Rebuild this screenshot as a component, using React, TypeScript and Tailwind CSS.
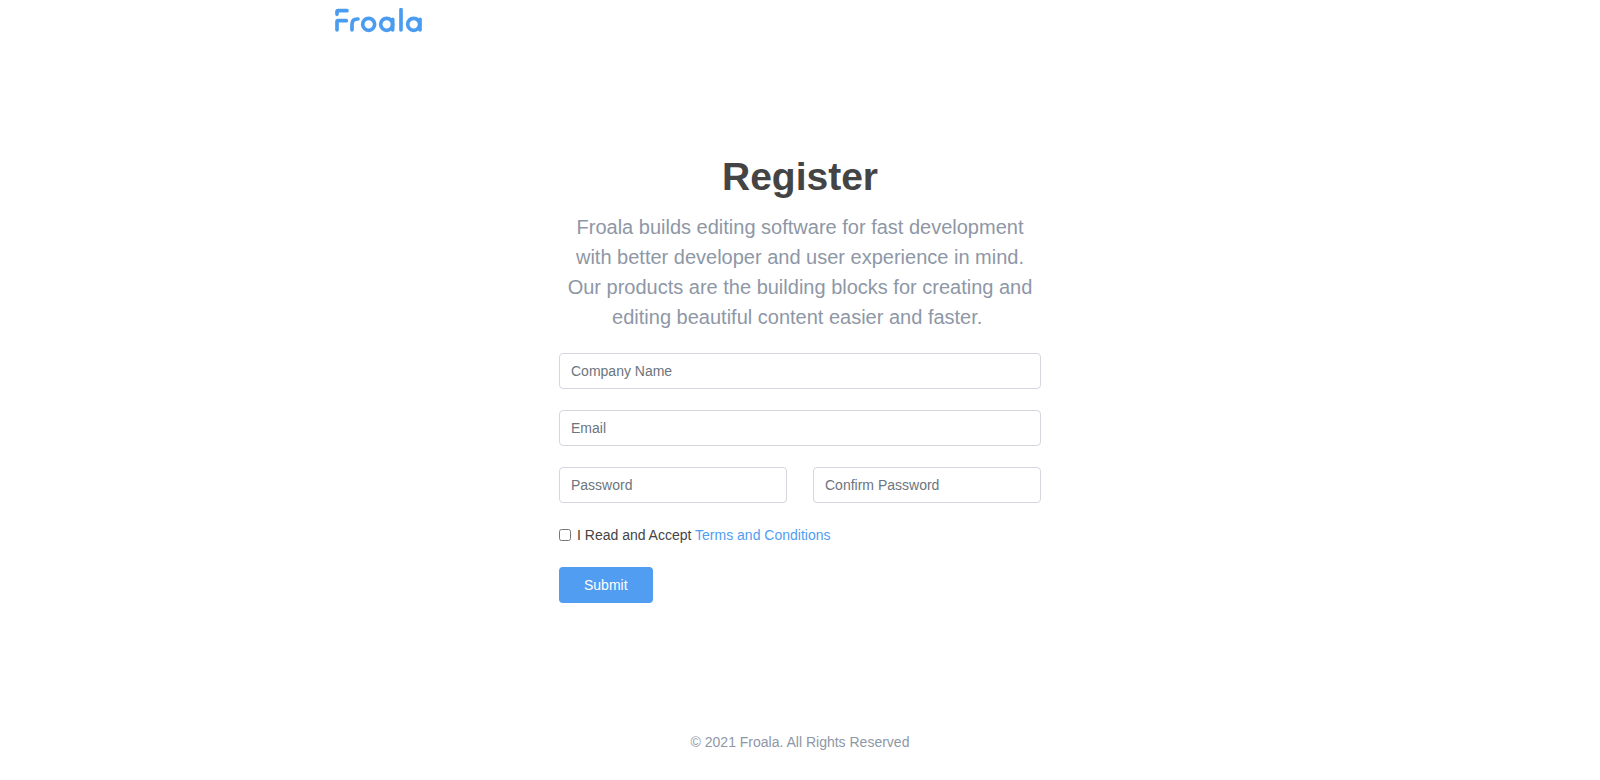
import type { InputHTMLAttributes } from 'react'

function Logo() {
    return (
        <svg
            viewBox="0 0 264 78"
            className="w-[88px] h-[26px]"
            fill="none"
            stroke="#4a9cf0"
            strokeWidth="11"
            strokeLinecap="round"
            strokeLinejoin="round"
            role="img"
            aria-label="Froala"
        >
            <path d="M6 19V12Q6 8 10 8H36" />
            <path d="M6 66V42Q6 38 10 38H34" />
            <path d="M51 66V49Q51 33 67 33H69" />
            <circle cx="101" cy="49" r="18" />
            <circle cx="155" cy="49" r="18" />
            <path d="M173 34V66" />
            <path d="M198 5V66" />
            <circle cx="236" cy="49" r="18" />
            <path d="M255 34V66" />
        </svg>
    )
}

function Field({ label, ...props }: InputHTMLAttributes<HTMLInputElement> & { label: string }) {
    return (
        <input
            aria-label={label}
            placeholder={label}
            className="w-full h-9 px-[11px] rounded-[4px] border border-[#d5d7de] bg-white text-[#444444] placeholder:text-[#6c757d] focus:outline-none focus:border-[#509df2]"
            {...props}
        />
    )
}

export default function App() {
    return (
        <div className="min-h-screen flex flex-col bg-white text-sm text-[#444444] font-['Liberation_Sans',Arial,sans-serif]">
            <header className="w-full max-w-[930px] mx-auto pt-2">
                <a href="#" className="inline-block align-top">
                    <Logo />
                </a>
            </header>

            <main className="w-full max-w-[482px] mx-auto pt-[119px]">
                <h1 className="text-[39px] leading-[48px] font-bold text-center">
                    Register
                </h1>
                <p className="mt-[11px] mb-[21px] text-[20px] leading-[30px] text-center text-[#8e97a6]">
                    Froala builds editing software for fast development with
                    better developer and user experience in mind. Our products
                    are the building blocks for creating and editing beautiful
                    content easier and faster.&nbsp;
                </p>

                <form className="grid gap-[21px]">
                    <Field label="Company Name" type="text" name="company" />
                    <Field label="Email" type="email" name="email" />
                    <div className="grid grid-cols-2 gap-[26px]">
                        <Field label="Password" type="password" name="password" />
                        <Field label="Confirm Password" type="password" name="confirm" />
                    </div>
                    <div className="flex items-center h-[22px]">
                        <input id="terms" type="checkbox" className="w-3 h-3 mr-[6px]" />
                        <label htmlFor="terms">
                            I Read and Accept{' '}
                            <a href="#" className="text-[#509df2] hover:underline">
                                Terms and Conditions
                            </a>
                        </label>
                    </div>
                    <button
                        type="submit"
                        className="justify-self-start h-9 px-[25px] rounded-[4px] bg-[#509df2] text-white hover:bg-[#3a8fee]"
                    >
                        Submit
                    </button>
                </form>
            </main>

            <footer className="mt-auto pb-7 text-center leading-5 text-[#8e97a6]">
                © 2021 Froala. All Rights Reserved
            </footer>
        </div>
    )
}
